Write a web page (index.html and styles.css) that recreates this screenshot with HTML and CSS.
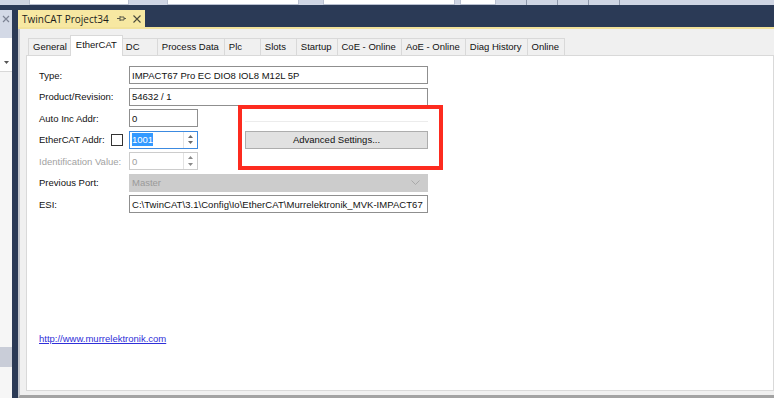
FILE: index.html
```html
<!DOCTYPE html>
<html lang="en">

<head>
    <meta charset="UTF-8">
    <title>TwinCAT Project34</title>
    <link rel="stylesheet" href="styles.css">
</head>

<body>

    <div class="toolbar">
        <span class="tb-box tb-a"></span>
        <span class="tb-box tb-b"></span>
        <span class="tb-box tb-c"></span>
        <span class="tb-box tb-d"></span>
        <span class="tb-sep"></span>
        <span class="tb-sep"></span>
        <span class="tb-sep"></span>
        <span class="tb-sep"></span>
    </div>

    <div class="workspace">
        <aside class="side">
            <div class="side-head">
                <svg width="8" height="8" viewBox="0 0 8 8"><path d="M1 1L7 7M7 1L1 7" stroke="#7d8394" stroke-width="1.2"/></svg>
            </div>
            <div class="side-combo">
                <svg width="5" height="3" viewBox="0 0 5 3"><path d="M0 0H5L2.5 3Z" fill="#555"/></svg>
            </div>
            <div class="side-fill"></div>
            <div class="side-band"></div>
            <div class="side-fill small"></div>
        </aside>

        <section class="doc">
            <div class="doc-tabs">
                <div class="doc-tab">
                    <span class="doc-title">TwinCAT Project34</span>
                    <svg class="pin" width="9" height="7" viewBox="0 0 9 7"><path d="M0 3.5H3M3 1V6M3 2H7V5H3M7 3.5H9" stroke="#5b5b4a" stroke-width="1" fill="none"/></svg>
                    <svg class="close" width="8" height="8" viewBox="0 0 8 8"><path d="M0.5 0.5L7.5 7.5M7.5 0.5L0.5 7.5" stroke="#4a4a3c" stroke-width="1.1"/></svg>
                </div>
            </div>

            <div class="doc-body">
                <div class="tabstrip">
                    <span class="tab">General</span>
                    <span class="tab active">EtherCAT</span>
                    <span class="tab">DC</span>
                    <span class="tab">Process Data</span>
                    <span class="tab">Plc</span>
                    <span class="tab">Slots</span>
                    <span class="tab">Startup</span>
                    <span class="tab">CoE - Online</span>
                    <span class="tab">AoE - Online</span>
                    <span class="tab">Diag History</span>
                    <span class="tab">Online</span>
                </div>

                <div class="page">
                    <div class="form">
                        <label class="lbl">Type:</label>
                        <div class="field wide">IMPACT67 Pro EC DIO8 IOL8 M12L 5P</div>

                        <label class="lbl">Product/Revision:</label>
                        <div class="field wide">54632 / 1</div>

                        <label class="lbl">Auto Inc Addr:</label>
                        <div class="field">0</div>
                        <div class="group-line"></div>

                        <label class="lbl lbl-check">EtherCAT Addr:<span class="checkbox"></span></label>
                        <div class="field spin focused">
                            <span class="spin-text"><span class="sel">1001</span></span>
                            <span class="spin-btns">
                                <svg width="5" height="3" viewBox="0 0 5 3"><path d="M2.5 0L5 3H0Z" fill="#6a6a6a"/></svg>
                                <svg width="5" height="3" viewBox="0 0 5 3"><path d="M0 0H5L2.5 3Z" fill="#6a6a6a"/></svg>
                            </span>
                        </div>
                        <button class="adv-btn">Advanced Settings...</button>

                        <label class="lbl disabled">Identification Value:</label>
                        <div class="field spin off">
                            <span class="spin-text">0</span>
                            <span class="spin-btns">
                                <svg width="5" height="3" viewBox="0 0 5 3"><path d="M2.5 0L5 3H0Z" fill="#8a8a8a"/></svg>
                                <svg width="5" height="3" viewBox="0 0 5 3"><path d="M0 0H5L2.5 3Z" fill="#8a8a8a"/></svg>
                            </span>
                        </div>

                        <label class="lbl">Previous Port:</label>
                        <div class="combo wide">
                            <span>Master</span>
                            <svg width="9" height="5" viewBox="0 0 9 5"><path d="M0.5 0.5L4.5 4.5L8.5 0.5" stroke="#a9a9a9" fill="none"/></svg>
                        </div>

                        <label class="lbl">ESI:</label>
                        <div class="field wide esi">C:\TwinCAT\3.1\Config\Io\EtherCAT\Murrelektronik_MVK-IMPACT67</div>
                    </div>

                    <a class="link" href="#">http://www.murrelektronik.com</a>

                    <div class="highlight"></div>
                </div>
            </div>
        </section>
    </div>

</body>

</html>
```

FILE: styles.css
```css
body {
    margin: 0;
    width: 774px;
    height: 398px;
    overflow: hidden;
    background-color: #2b3a56;
    font-family: 'Liberation Sans', Arial, sans-serif;
    font-size: 9.5px;
    color: #111;
}

/* toolbar strip at the very top */
.toolbar {
    height: 5px;
    background-color: #cfd5e3;
    display: flex;
    align-items: flex-end;
}

.tb-box {
    height: 4px;
    align-self: flex-start;
    background-color: #fff;
    border: 1px solid #b9c0d0;
    border-top: none;
}

.tb-a { width: 98px; margin-left: 29px; }
.tb-b { width: 130px; margin-left: 38px; }
.tb-c { width: 130px; margin-left: 24px; }
.tb-d { width: 34px; margin-left: 5px; }

.tb-sep {
    width: 1px;
    height: 5px;
    background-color: #8e97aa;
    margin-left: 30px;
}

.workspace {
    display: flex;
    height: 393px;
}

/* side tool window */
.side {
    width: 12px;
    margin-top: 5px;
    display: flex;
    flex-direction: column;
}

.side-head {
    height: 28px;
    background-color: #d3d9e6;
    display: flex;
    justify-content: center;
    padding-top: 5px;
    box-sizing: border-box;
}

.side-combo {
    height: 34px;
    background-color: #fff;
    border-bottom: 1px solid #d8d8d8;
    display: flex;
    align-items: flex-end;
    justify-content: center;
    padding-bottom: 7px;
    box-sizing: border-box;
}

.side-fill {
    flex: 1;
    background-color: #f6f6f6;
}

.side-fill.small {
    flex: none;
    height: 31px;
}

.side-band {
    height: 20px;
    background-color: #c9cdd8;
}

/* document window */
.doc {
    flex: 1;
    margin-left: 6px;
    display: flex;
    flex-direction: column;
}

.doc-tabs {
    height: 22px;
    display: flex;
    align-items: flex-end;
    border-bottom: 2px solid #f2e29b;
}

.doc-tab {
    width: 127px;
    height: 17px;
    background-color: #f7e8a2;
    display: flex;
    align-items: center;
    padding-left: 4px;
    box-sizing: border-box;
}

.doc-title {
    font-family: 'Open Sans', 'Liberation Sans', sans-serif;
    font-size: 10px;
    color: #1b1b1b;
}

.pin {
    margin-left: 8px;
}

.close {
    margin-left: 7px;
}

.doc-body {
    flex: 1;
    background-color: #f0f0f0;
    border-left: 2px solid #c2c5cc;
    padding: 9px 0 4px 8px;
    display: flex;
    flex-direction: column;
    border-bottom: 3px solid #a3a3a3;
}

/* property tabs */
.tabstrip {
    height: 17px;
    display: flex;
    align-items: flex-end;
    position: relative;
    z-index: 1;
}

.tab {
    height: 16px;
    min-width: 26px;
    padding: 0 5px 0 4px;
    margin-right: -1px;
    border: 1px solid #d9d9d9;
    border-bottom: none;
    background-color: #f0f0f0;
    line-height: 16px;
    white-space: nowrap;
}

.tab.active {
    height: 20px;
    margin: 0 -2px -1px -2px;
    padding: 0 5px;
    background-color: #fff;
    line-height: 17px;
    position: relative;
}

.page {
    flex: 1;
    margin-left: -2px;
    border: 1px solid #d9d9d9;
    background-color: #fff;
    padding: 10px 12px;
    position: relative;
}

/* form grid */
.form {
    display: grid;
    grid-template-columns: 90px 69px 47px 183px;
    grid-auto-rows: 18px;
    row-gap: 3.5px;
}

.lbl {
    grid-column: 1;
    display: flex;
    align-items: center;
    white-space: nowrap;
}

.lbl.disabled {
    color: #a2a2a2;
}

.lbl-check {
    justify-content: space-between;
    padding-right: 6px;
}

.checkbox {
    width: 10px;
    height: 10px;
    border: 1px solid #333;
    background-color: #fff;
}

.field {
    grid-column: 2;
    border: 1px solid #8f8f8f;
    display: flex;
    align-items: center;
    padding-left: 2px;
    white-space: nowrap;
    overflow: hidden;
}

.wide {
    grid-column: 2 / 5;
}

.esi {
    letter-spacing: 0.05px;
}

.field.spin {
    padding-left: 0;
}

.field.focused {
    border-color: #3c8ae0;
}

.field.off {
    border-color: #cccccc;
    color: #9d9d9d;
}

.spin-text {
    flex: 1;
    padding-left: 2px;
}

.sel {
    background-color: #3399ff;
    color: #fff;
    padding: 1px 0;
}

.spin-btns {
    width: 13px;
    height: 100%;
    border-left: 1px solid #e3e3e3;
    display: flex;
    flex-direction: column;
    align-items: center;
    justify-content: space-evenly;
}

.group-line {
    grid-column: 4;
    align-self: end;
    height: 1px;
    background-color: #ececec;
    margin-bottom: 5px;
}

.adv-btn {
    grid-column: 4;
    font-family: inherit;
    font-size: 9.5px;
    color: #111;
    background-color: #e1e1e1;
    border: 1px solid #adadad;
    padding: 0;
    margin: 0;
}

.combo {
    background-color: #cccccc;
    color: #9a9a9a;
    display: flex;
    align-items: center;
    justify-content: space-between;
    padding: 0 8px 0 3px;
}

.link {
    display: inline-block;
    margin-top: 120px;
    color: #2f2fd8;
}

/* red annotation frame */
.highlight {
    position: absolute;
    left: 211px;
    top: 49px;
    width: 205px;
    height: 65px;
    border: 4px solid #fd2b1f;
    box-sizing: border-box;
}
```
